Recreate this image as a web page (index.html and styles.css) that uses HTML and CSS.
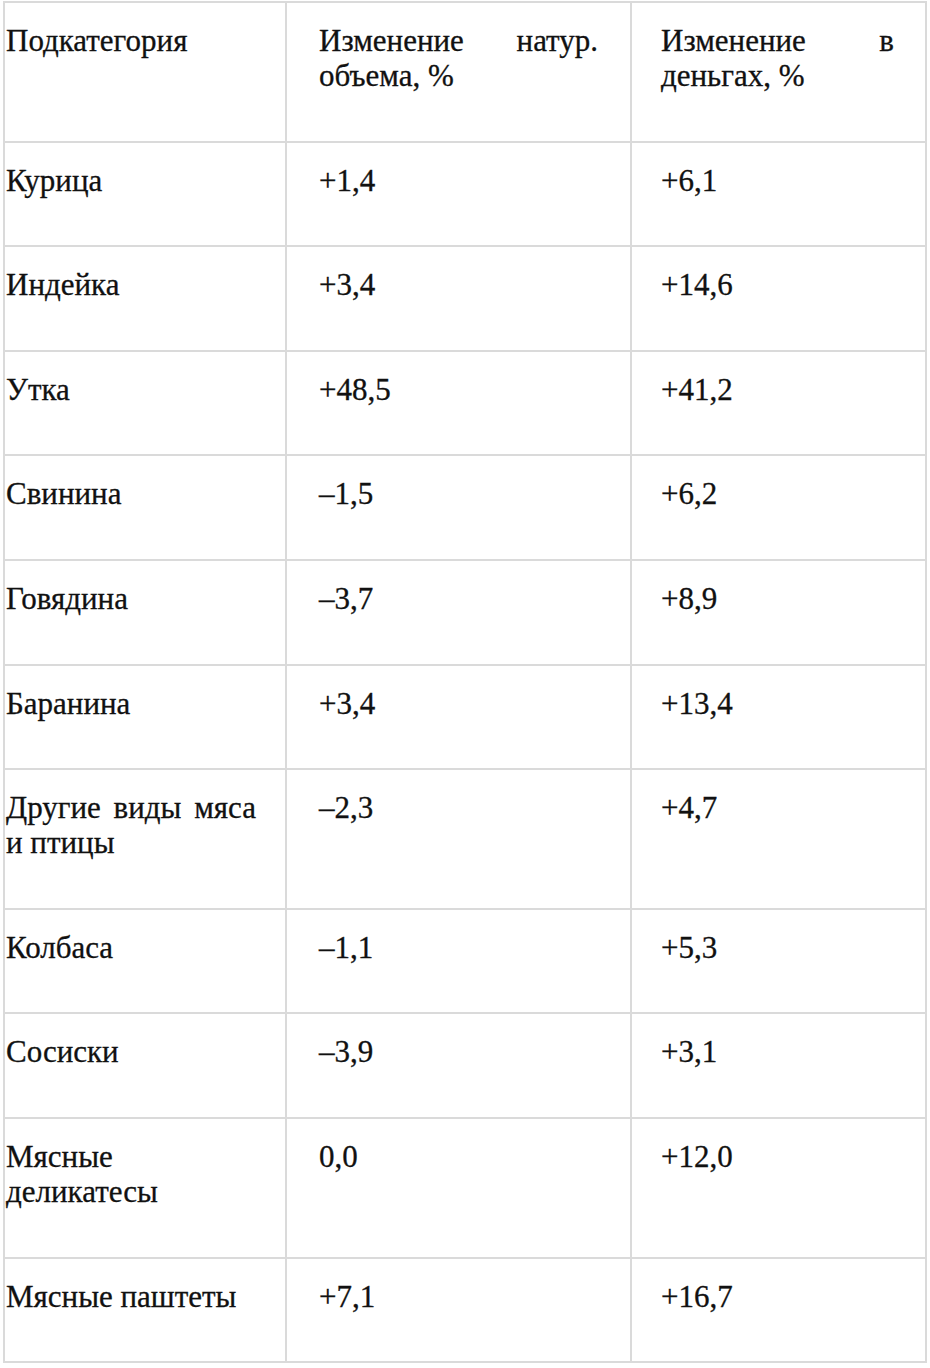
FILE: index.html
```html
<!DOCTYPE html>
<html lang="ru">
<head>
<meta charset="utf-8">
<title>Таблица</title>
<link rel="stylesheet" href="styles.css">
</head>
<body>
<table class="data">
  <colgroup>
    <col class="c1">
    <col class="c2">
    <col class="c3">
  </colgroup>
  <tr><td class="first">Подкатегория</td><td>Изменение натур. объема, %</td><td class="third">Изменение в деньгах, %</td></tr>
  <tr><td class="first">Курица</td><td>+1,4</td><td class="third">+6,1</td></tr>
  <tr><td class="first">Индейка</td><td>+3,4</td><td class="third">+14,6</td></tr>
  <tr><td class="first">Утка</td><td>+48,5</td><td class="third">+41,2</td></tr>
  <tr><td class="first">Свинина</td><td>–1,5</td><td class="third">+6,2</td></tr>
  <tr><td class="first">Говядина</td><td>–3,7</td><td class="third">+8,9</td></tr>
  <tr><td class="first">Баранина</td><td>+3,4</td><td class="third">+13,4</td></tr>
  <tr><td class="first">Другие виды мяса и птицы</td><td>–2,3</td><td class="third">+4,7</td></tr>
  <tr><td class="first">Колбаса</td><td>–1,1</td><td class="third">+5,3</td></tr>
  <tr><td class="first">Сосиски</td><td>–3,9</td><td class="third">+3,1</td></tr>
  <tr><td class="first">Мясные деликатесы</td><td>0,0</td><td class="third">+12,0</td></tr>
  <tr><td class="first">Мясные паштеты</td><td>+7,1</td><td class="third">+16,7</td></tr>
</table>
</body>
</html>
```

FILE: styles.css
```css
html, body {
  margin: 0;
  padding: 0;
  background: #ffffff;
}

body {
  font-family: "Liberation Serif", serif;
  font-size: 31px;
  color: #111111;
}

.data {
  border-collapse: collapse;
  table-layout: fixed;
  width: 922px;
  margin: 1px 0 0 3px;
}

.c1 { width: 282px; }
.c2 { width: 345px; }
.c3 { width: 295px; }

.data td {
  border: 2px solid #dadada;
  vertical-align: top;
  text-align: justify;
  line-height: 35px;
  padding: 20px 32px 47.6px 32px;
  -webkit-text-stroke: 0.3px #111111;
}

.data td.first {
  padding-left: 1px;
  padding-right: 29px;
}

.data td.third {
  padding-left: 29px;
  padding-right: 31px;
}
```
